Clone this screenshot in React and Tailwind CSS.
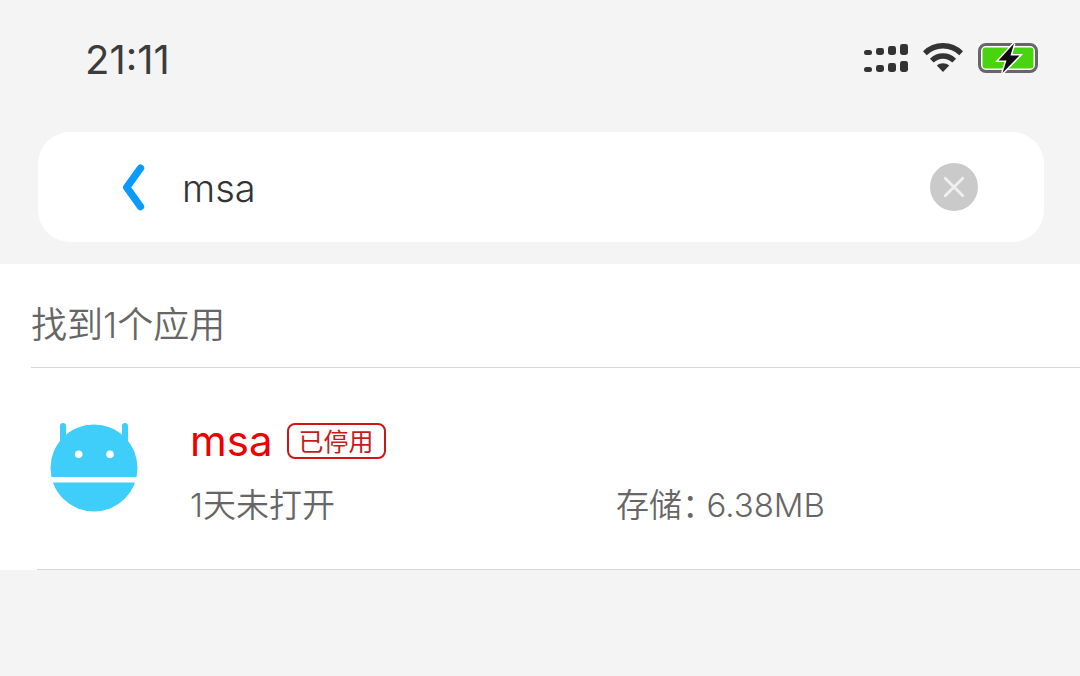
import { useState } from "react";

function SignalIcon() {
  const bars = [
    { x: 0, h: 5, r: 2.5 },
    { x: 12, h: 7, r: 2.4 },
    { x: 24, h: 9, r: 2.4 },
    { x: 36, h: 11, r: 2.4 },
  ];
  return (
    <svg viewBox="0 0 44 30" className="h-[30px] w-11" fill="#333333" aria-hidden="true">
      {bars.map((b) => (
        <g key={b.x}>
          <rect x={b.x} y={12 - b.h} width="8" height={b.h} rx={b.r} />
          <rect x={b.x} y={29 - b.h} width="8" height={b.h} rx={b.r} />
        </g>
      ))}
    </svg>
  );
}

function WifiIcon() {
  return (
    <svg viewBox="0 0 40 30" className="h-[30px] w-10" fill="none" stroke="#333333" aria-hidden="true">
      <path d="M1.8 10.2C12 0.2 28 0.2 38.2 10.2" strokeWidth="5.4" />
      <path d="M8.8 17.6C15.3 11.4 24.7 11.4 31.2 17.6" strokeWidth="5.4" />
      <path d="M13.8 22.6C17.4 19.4 22.6 19.4 26.2 22.6L20 29Z" fill="#333333" stroke="none" />
    </svg>
  );
}

function BatteryIcon() {
  return (
    <svg viewBox="0 0 60 32" className="h-8 w-[60px]" aria-hidden="true">
      <rect x="1.5" y="2.5" width="57" height="27" rx="6.5" fill="#ffffff" stroke="#69656b" strokeWidth="3" />
      <rect x="4.5" y="5.5" width="51" height="21" rx="3" fill="#48d40e" />
      <path
        d="M36 1.5L20.5 18.5H28.5L24.5 31L41.5 13.5H32.5Z"
        fill="#0d0d0d"
        stroke="#ffffff"
        strokeWidth="3"
        paintOrder="stroke"
      />
    </svg>
  );
}

function RobotIcon() {
  return (
    <svg viewBox="0 0 88 90" className="h-[90px] w-[88px] shrink-0" aria-hidden="true">
      <g fill="#3fcdf9">
        <rect x="10" y="1" width="6" height="26" rx="3" />
        <rect x="72" y="1" width="6" height="26" rx="3" />
        <circle cx="44" cy="46" r="43.5" />
      </g>
      <g fill="#ffffff">
        <circle cx="28.7" cy="32.3" r="3.8" />
        <circle cx="60" cy="32.3" r="3.8" />
        <rect x="0" y="55" width="88" height="5.5" />
      </g>
    </svg>
  );
}

function StatusBar() {
  return (
    <div className="flex h-[120px] items-center justify-between pr-[42px] pl-[85px]">
      <time className="text-[40px] leading-10 text-[#3c3c3c]">21:11</time>
      <div className="flex items-center gap-[15px] pb-1">
        <SignalIcon />
        <WifiIcon />
        <BatteryIcon />
      </div>
    </div>
  );
}

function SearchBar() {
  const [query, setQuery] = useState("msa");
  return (
    <form
      className="mr-9 ml-[38px] flex h-[110px] items-center rounded-[32px] bg-white pr-[66px] pl-[84px]"
      onSubmit={(e) => e.preventDefault()}
    >
      <button type="button" aria-label="返回" className="shrink-0">
        <svg viewBox="0 0 24 48" className="h-12 w-6" fill="none" stroke="#0a9bff" strokeWidth="7.4" strokeLinecap="round" strokeLinejoin="round">
          <path d="M18.5 5.2L4.7 24.4L18.5 43.6" />
        </svg>
      </button>
      <input
        type="text"
        aria-label="搜索应用"
        value={query}
        onChange={(e) => setQuery(e.target.value)}
        className="ml-9 min-w-0 flex-1 bg-transparent pt-0.5 text-[38px] leading-[48px] font-[350] text-[#333333] outline-none"
      />
      <button
        type="button"
        aria-label="清除"
        onClick={() => setQuery("")}
        className="flex size-12 shrink-0 items-center justify-center rounded-full bg-[#cacaca]"
      >
        <svg viewBox="0 0 24 24" className="size-6" fill="none" stroke="#f0f0f0" strokeWidth="2.8" strokeLinecap="round">
          <path d="M3.2 3.2L20.8 20.8M20.8 3.2L3.2 20.8" />
        </svg>
      </button>
    </form>
  );
}

function AppRow() {
  return (
    <li className="flex pl-[50px]">
      <div className="flex w-[140px] shrink-0 pt-[54px]">
        <RobotIcon />
      </div>
      <div className="flex-1 pt-12 pb-[42px]">
        <div className="flex items-center gap-[14px]">
          <h2 className="text-[42px] leading-[50px] text-[#ee0000]">msa</h2>
          <span className="flex h-9 items-center rounded-lg border-2 border-[#d01515] px-[10px] pt-0.5 text-[25px] leading-8 text-[#c81a1a]">
            已停用
          </span>
        </div>
        <div className="mt-[17px] flex text-[33px] leading-[44px] font-[350] text-[#666666]">
          <p className="w-[426px]">1天未打开</p>
          <p className="flex gap-2">
            <span className="[font-feature-settings:'halt']">存储：</span>
            <span>6.38MB</span>
          </p>
        </div>
      </div>
    </li>
  );
}

export default function App() {
  return (
    <div className="min-h-screen bg-[#f4f4f4] font-['Inter','Noto_Sans_CJK_SC',sans-serif]">
      <header className="pb-[22px]">
        <StatusBar />
        <div className="pt-3">
          <SearchBar />
        </div>
      </header>
      <main className="bg-white">
        <h1 className="ml-[31px] border-b border-[#d6d6d6] pt-[37px] pb-[18px] text-[36px] leading-[48px] font-[350] text-[#666666]">
          找到1个应用
        </h1>
        <ul>
          <AppRow />
        </ul>
        <div className="ml-[37px] border-b border-[#d6d6d6]" />
      </main>
    </div>
  );
}
